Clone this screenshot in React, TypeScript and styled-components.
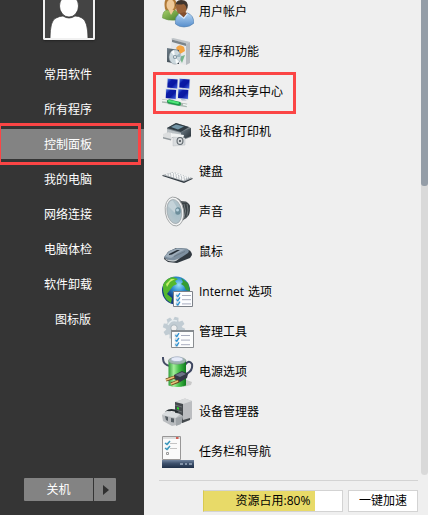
import React from 'react';
import styled, { createGlobalStyle } from 'styled-components';

const GlobalStyle = createGlobalStyle`
  *, *::before, *::after { box-sizing: border-box; }
  body { margin: 0; overflow: hidden; background: #efefef; }
  button { font: inherit; padding: 0; border: 0; }
`;

const Menu = styled.div`
  display: flex;
  width: 428px;
  height: 515px;
  overflow: hidden;
  background: #efefef;
  color: #000;
  font: 12px/20px 'Open Sans', 'Noto Sans CJK SC', sans-serif;
`;

const Sidebar = styled.aside`
  display: flex;
  flex-direction: column;
  width: 144px;
  background: #353535;
  color: #fff;
`;

const Avatar = styled.div`
  width: 52px;
  height: 40px;
  margin-left: 43px;
  border: 2px solid #f1f1f1;
  border-top: 0;
  border-radius: 0 0 2px 2px;
  background: #444;
  box-shadow: 0 1px 2px #222;
  svg { display: block; }
`;

const SideNav = styled.nav`
  display: flex;
  flex-direction: column;
  gap: 5px;
  padding-top: 19px;
`;

const SideItem = styled.div<{ $active?: boolean; $indent?: boolean }>`
  position: relative;
  height: 30px;
  padding-left: ${p => (p.$indent ? 55 : 44)}px;
  line-height: 32px;
  background: ${p => (p.$active ? '#838383' : 'transparent')};
`;

const Highlight = styled.span<{ $side?: boolean }>`
  position: absolute;
  left: ${p => (p.$side ? -2 : 9)}px;
  top: ${p => (p.$side ? -6 : 0)}px;
  width: 143px;
  height: 42px;
  border: 3px solid #fb4545;
  pointer-events: none;
`;

const PowerGroup = styled.div`
  display: flex;
  gap: 1px;
  margin: auto 0 14px 24px;
`;

const PowerButton = styled.button<{ $small?: boolean }>`
  display: flex;
  align-items: center;
  justify-content: center;
  width: ${p => (p.$small ? 22 : 69)}px;
  height: 23px;
  border-radius: ${p => (p.$small ? '0 1px 1px 0' : '1px 0 0 1px')};
  background: #838383;
  color: #fff;
  svg { margin-left: 2px; }
`;

const Content = styled.main`
  display: flex;
  flex-direction: column;
  width: 277px;
`;

const Applets = styled.div`
  height: 480px;
  overflow: hidden;
`;

const AppletList = styled.ul`
  margin: -8px 0 0;
  padding: 0;
  list-style: none;
`;

const Applet = styled.li`
  position: relative;
  display: flex;
  align-items: center;
  gap: 5px;
  height: 40px;
  padding-left: 18px;
  svg { flex: none; }
`;

const AppletName = styled.span`
  margin-top: -1px;
  white-space: nowrap;
  word-spacing: 1px;
`;

const Footer = styled.footer`
  display: flex;
  gap: 5px;
  height: 35px;
  margin: 0 3px 0 15px;
  padding: 9px 0 0 44px;
  border-top: 1px solid #d3d3d3;
`;

const Meter = styled.div`
  width: 140px;
  height: 22px;
  border: 1px solid #d3d3d3;
  border-left-color: #d9c94f;
  background: linear-gradient(90deg, #e8da68 111px, #fff 111px);
  line-height: 20px;
  text-align: center;
`;

const SpeedButton = styled.button`
  width: 70px;
  height: 22px;
  border: 1px solid #d3d3d3;
  background: #fff;
  color: #000;
`;

const ScrollTrack = styled.div`
  width: 7px;
  height: 475px;
  border-radius: 0 0 4px 4px;
  background: #d9d9d9;
`;

const ScrollThumb = styled.div`
  height: 186px;
  border-radius: 0 0 3px 3px;
  background: #949da7;
`;

const Icon = ({ children }: { children: React.ReactNode }) => (
  <svg width="32" height="32" viewBox="0 0 32 32">{children}</svg>
);

const GradientDefs = styled.svg`
  position: absolute;
  width: 0;
  height: 0;
`;

const Gradients = () => (
  <GradientDefs>
    <defs>
      <linearGradient id="steel" x2="1" y2="1"><stop stopColor="#f1f3f4" /><stop offset="1" stopColor="#9ba1a5" /></linearGradient>
      <linearGradient id="dark" x2="1" y2="1"><stop stopColor="#71808b" /><stop offset="1" stopColor="#20282e" /></linearGradient>
      <linearGradient id="screen" x2="1" y2="1"><stop stopColor="#4d7be8" /><stop offset=".3" stopColor="#0b1ba8" /><stop offset=".6" stopColor="#0a18a2" /><stop offset="1" stopColor="#4668e6" /></linearGradient>
      <linearGradient id="cell" x2="1"><stop stopColor="#2f9f38" /><stop offset=".3" stopColor="#a4ee9b" /><stop offset=".6" stopColor="#45c04a" /><stop offset="1" stopColor="#0f7a1c" /></linearGradient>
      <linearGradient id="greenShirt" x2="1" y2="1"><stop stopColor="#a8d16c" /><stop offset="1" stopColor="#477f29" /></linearGradient>
      <linearGradient id="blueShirt" x2="0" y2="1"><stop stopColor="#b5d6f5" /><stop offset="1" stopColor="#568dcb" /></linearGradient>
      <radialGradient id="ocean" cx=".6" cy=".3"><stop stopColor="#9be0fa" /><stop offset=".5" stopColor="#2d8ed0" /><stop offset="1" stopColor="#123b83" /></radialGradient>
      <radialGradient id="cone" cx=".65" cy=".5"><stop stopColor="#6f8c98" /><stop offset=".35" stopColor="#a9c0c9" /><stop offset="1" stopColor="#b4c4cb" /></radialGradient>
      <linearGradient id="bar" x2="0" y2="1"><stop stopColor="#7386a0" /><stop offset=".4" stopColor="#40536f" /><stop offset="1" stopColor="#1f3048" /></linearGradient>
    </defs>
  </GradientDefs>
);

const UsersIcon = () => (
  <Icon>
    <path d="M3 13Q1 2 7 2q8-1 8 9l-3 5H5z" fill="#b17a37" />
    <ellipse cx="8.500" cy="9" rx="4" ry="5.500" fill="#efc998" />
    <path d="M.5 22Q.5 14 6 14l3 3 4-3 4 3-3 7q-8 1-13.500-2z" fill="url(#greenShirt)" stroke="#5f9042" strokeWidth=".5" />
    <path d="m6.500 14 2.500 5 3-5z" fill="#efc998" />
    <ellipse cx="19.500" cy="11.500" rx="5.500" ry="7" fill="#9a633a" />
    <path d="M13.500 11Q13 4 19 4q8 0 6.500 8l-1 2q0-5-3-6-4 1-7 0z" fill="#3f352e" />
    <path d="M13.500 28q-1-8 4-10l4 2 4-3q6 2 6.500 10-4 4-10 4-5 0-8.500-3z" fill="url(#blueShirt)" stroke="#4e7cad" strokeWidth=".6" />
    <path d="m17 17 5 5 3-5-2-1-4 1z" fill="#84502f" />
    <path d="m17 17.500 4.500 4 3.500-4 1 .5-4 5-5.500-4z" fill="#dcecff" />
  </Icon>
);

const ProgramsIcon = () => (
  <Icon>
    <path d="m9 3 2-1 17 4v21l-5 2-14-4z" fill="#e6e8ea" />
    <path d="m9 3 2-1 17 4-4 2z" fill="#bfc4c8" /><path d="m10 3.500 14 4v2.500L10 6z" fill="#7b848a" />
    <path d="M24 8l4-2v21l-4 2z" fill="#b7bbc0" />
    <path d="M14 12q3-5 8-1l1 4-5 3z" fill="#f4a340" /><path d="m17 21 6-2-3 8z" fill="#76b58b" />
    <path d="m5 12 12 2v14L5 26z" fill="url(#dark)" />
    <ellipse cx="13" cy="21" rx="6" ry="7.200" fill="#cdd9de" stroke="#8897a0" strokeWidth=".5" />
    <path d="m13 21-4-5 3-2zm0 0 4 5-3 2z" fill="#f8fbfc" /><path d="m13 21 5-4v4z" fill="#9fb7c1" />
    <circle cx="13" cy="21" r="2.100" fill="#8196a2" /><circle cx="13" cy="21" r=".9" fill="#fff" />
  </Icon>
);

const NetworkIcon = () => (
  <Icon>
    {[[5, 2], [17, 2], [3.500, 12.500], [15.700, 12.500]].map(([x, y]) => (
      <g key={`${x}-${y}`} transform={`translate(${x} ${y})`}>
        <path d="m3 10 4 .5 2 1.500H4z" fill="#aeb9c7" />
        <path d="m0 0 11.300 1-.5 10.500L-.5 10z" fill="#d4dce8" />
        <path d="m.7.700 9.900.9-.4 9-9.900-1z" fill="url(#screen)" />
      </g>
    ))}
    <path d="m0 25 5 .5 2 1 12 2 6 1" fill="none" stroke="#a9b6af" strokeWidth="3.500" />
    <path d="m0 24.500 5 .5m16 3.500 5 1" fill="none" stroke="#f0f4f2" strokeWidth="1.700" />
    <path d="m7 25.500 10 2.200" fill="none" stroke="#1c9a4b" strokeWidth="4" strokeLinecap="round" />
    <path d="m7 25 9 2" fill="none" stroke="#4ee778" strokeWidth="2" strokeLinecap="round" />
  </Icon>
);

const PrinterIcon = () => (
  <Icon>
    <path d="m5 12 9-5 13 4 2 1v9l-11 4-13-6z" fill="#7a8389" />
    <path d="m5 12 9-5 13 4-8 5z" fill="#303c44" /><path d="m9 11 5-2.500 8 2-6 3z" fill="#7295a7" />
    <path d="m19 16 10-4v8l-10 4z" fill="url(#dark)" /><path d="m5 13 14 4v3L5 16z" fill="#b9c0c4" />
    <path d="m1 18 5-2 4 1v7l-9-2z" fill="#dcdedf" /><path d="m1 21 8 2v1.500l-8-2z" fill="#92999d" />
    <path d="m9 17 13 2-1 4-12-2z" fill="#f0f2f2" />
    <path d="m11 21 12 1v7l-12 1z" fill="#dadddf" stroke="#b4b9bc" strokeWidth=".4" />
    <ellipse cx="18" cy="25" rx="3.500" ry="4" fill="#61696f" /><ellipse cx="18" cy="25" rx="2.400" ry="3" fill="#d5d8da" /><circle cx="18" cy="25" r=".9" fill="#30383e" />
  </Icon>
);

const KeyboardIcon = () => (
  <Icon>
    <path d="m.5 19 11-3 19 6-8.500 4z" fill="#aab0b5" />
    <path d="m.5 19 21.500 6.500 8.500-3.500v1L22 27 .5 20z" fill="#303940" />
    <g fill="none" stroke="#f9fafa" strokeWidth="1.300" strokeDasharray="2 .8">
      <path d="m4 18.500 18 5.500M6.500 17.800l17.500 5.300M9 17.200l17 5M11 16.500l17 5" />
    </g>
  </Icon>
);

const SpeakerIcon = () => (
  <Icon>
    <path d="M12 1q5 1 7 4l5 .5q4 1.500 4 9-1 7-6 9l-7 6z" fill="#4f565a" />
    <path d="M20 7q7-1 8 3l-1 9-7 4z" fill="#3a4246" />
    <path d="M22 8q3 7 0 14m3-14q2 6 0 12" fill="none" stroke="#71797c" />
    <ellipse cx="12.500" cy="15.500" rx="9.200" ry="14.600" transform="rotate(-9 12.500 15.500)" fill="#f2f3f3" stroke="#989b9c" strokeWidth=".8" />
    <ellipse cx="12.300" cy="15.500" rx="7.300" ry="12.200" transform="rotate(-9 12.300 15.500)" fill="url(#cone)" stroke="#939b9f" strokeWidth=".6" />
    <path d="M6 10q2-6 5-5l5 8-3 4z" fill="#c5d3d9" /><ellipse cx="16" cy="15" rx="2.800" ry="3.700" fill="#6d8e9b" /><circle cx="15.500" cy="14" r="1.500" fill="#b9d3df" />
  </Icon>
);

const MouseIcon = () => (
  <Icon>
    <path d="m2 22 4-6 8-4 11 1q5 2 5 6l-2 3-13 5-9-1-4-3z" fill="#313940" />
    <path d="m2 21 5-6 8-3 10 .5q3 2 1 4.500l-6 4-7 4q-6 1-11-4z" fill="#7d8f9f" />
    <path d="m3 20 5-5 7-2.500 8 1-8 4-5 4q-4 1-7-1.500z" fill="#9eadba" />
    <path d="m2 22q5 3 11 2l5-2-4 3q-7 2-12-3z" fill="#c8cdd0" />
    <path d="m7 18 8-4 3 0-8 4.500-3 .5z" fill="#252e36" /><path d="m12 20.500 11-5" stroke="#667581" strokeWidth=".8" />
  </Icon>
);

const Checks = ({ x, y, step = 4.2 }: { x: number; y: number; step?: number }) => (
  <>
    {[0, 1, 2].map(i => (
      <g key={i} transform={`translate(${x} ${y + i * step})`}>
        <path d="M0-.5h3v3H0z" fill="#e0eaf1" stroke="#b1c0ca" strokeWidth=".4" />
        <path d="m.5.700 1.300 1.400L4-1.300" fill="none" stroke="#278fd0" strokeWidth="1.200" />
        <path d="M6 1h9" stroke="#9298ad" strokeWidth=".8" />
      </g>
    ))}
  </>
);

const InternetIcon = () => (
  <Icon>
    <circle cx="14" cy="14.500" r="14" fill="url(#ocean)" />
    <path d="M1 9q3-7 10-8l5 2-3 2 2 3-4 2-3 4-3 4 5 4-1 5Q0 23 1 9z" fill="#54b82e" />
    <path d="m19 2 7 5 2 8-4-1-2-4-3-2 2-2z" fill="#349d31" />
    <path d="m4 8 5-5 4 0-5 3-3 5z" fill="#c3ef6c" />
    <path d="M11.500 15.500h19v15h-19z" fill="#fcfdff" stroke="#7c8188" />
    <Checks x={14} y={18.500} />
  </Icon>
);

const ToolsIcon = () => (
  <Icon>
    <g transform="translate(12 12)" fill="#c1ccd3">
      {[0, 45, 90, 135, 180, 225, 270, 315].map(a => <path key={a} d="m-2.200-11 4 0 1 5h-6z" transform={`rotate(${a + 15})`} />)}
      <circle r="8" /><path d="M-6-3q3-6 9-4" fill="none" stroke="#e5ecef" strokeWidth="1.500" /><circle r="3.200" fill="#efefef" stroke="#aab7be" />
    </g>
    <path d="M9.500 14.500h22v17h-22z" fill="#fcfdfd" stroke="#898d90" /><path d="M9 14h23v2H9z" fill="#868c90" />
    <Checks x={13} y={18.500} step={4.600} />
  </Icon>
);

const PowerIcon = () => (
  <Icon>
    <path d="M22 23l8 3-1 3-8 2z" fill="#c9c9c9" />
    <path d="M1 1q-.5 8 7 9" fill="none" stroke="#454c65" strokeWidth="2" />
    <path d="M23 9q4-6 7-1 1 6-4 9l-4 2" fill="none" stroke="#3e4660" strokeWidth="2" />
    <path d="M6.500 4.500v25q8 3 17.500 0v-25z" fill="url(#cell)" />
    <ellipse cx="15.200" cy="4.700" rx="8.800" ry="3.500" fill="#9fb5ae" stroke="#718581" strokeWidth=".5" />
    <ellipse cx="15" cy="3.200" rx="6" ry="2.400" fill="#e5eaf8" stroke="#9aa6bd" strokeWidth=".6" />
    <path d="m12 19 8-4 6 3-1 4-7 4-6-3z" fill="#343946" /><path d="m13 19 7-3 4 2-6 3z" fill="#6d7486" />
    <path d="m13 21-9 3m13 1-8 3" stroke="#70481f" strokeWidth="3" /><path d="m12 21-8 3m12 1-7 3" stroke="#e8c17a" strokeWidth="1.500" />
  </Icon>
);

const DevicesIcon = () => (
  <Icon>
    <path d="m13 6 10-3.500 7 2.500v18l-9 4-8-3z" fill="#bbbdc0" /><path d="m13 6 10-3.500 7 2.500-9 3z" fill="#d9dbdc" />
    <path d="m13 6 8 2v19l-8-3z" fill="#44494d" /><path d="m13 9 7 2m-7 3 7 2" stroke="#777d80" strokeWidth=".8" />
    <path d="m15 11 2 .8v2l-2-.8z" fill="#25e428" />
    <path d="m20 27 8-3v-2l-7 2z" fill="#44494c" />
    <path d="M4 16q5-4 12 0" fill="none" stroke="#262d31" strokeWidth="2" />
    <path d="m0 19 5-4 13 3 3 2-2 8-9 2-9-5z" fill="#b9bcbf" /><path d="m0 19 5-4 13 3-4 4z" fill="#d9dcde" />
    <path d="m3 20 1 4 2 1v-4zm6 2v4l3 .5v-4z" fill="#555d63" /><path d="m14 22 7-2-2 8-5 2z" fill="#9fa4a8" />
  </Icon>
);

const TaskbarIcon = () => (
  <Icon>
    <path d="M.5.500h18v23H.5z" fill="#fafafa" stroke="#989797" /><path d="M1 1h17v2H1z" fill="#ddd" /><path d="M14 1h2.500v2H14z" fill="#d35d52" />
    <path d="M4 6h3v3H4zm0 5h3v3H4z" fill="#e2edf2" />
    <path d="m3 7 2 1.500 3-3.500m-5 7 2 1.500 3-3.500" fill="none" stroke="#3795bb" strokeWidth="1.500" />
    <path d="M8 7.500h7m-7 5h7" stroke="#c4c4c4" /><path d="M4.500 16.500h2v2h-2z" fill="none" stroke="#999" />
    <path d="M0 24h32v8H0z" fill="url(#bar)" /><path d="M18 27h3v2h-3zm5 0h2v2h-2zm4 0h3v2h-3z" fill="#8494aa" />
  </Icon>
);

const sideItems = ['常用软件', '所有程序', '控制面板', '我的电脑', '网络连接', '电脑体检', '软件卸载', '图标版'];

const applets: [string, React.ComponentType][] = [
  ['用户帐户', UsersIcon],
  ['程序和功能', ProgramsIcon],
  ['网络和共享中心', NetworkIcon],
  ['设备和打印机', PrinterIcon],
  ['键盘', KeyboardIcon],
  ['声音', SpeakerIcon],
  ['鼠标', MouseIcon],
  ['Internet 选项', InternetIcon],
  ['管理工具', ToolsIcon],
  ['电源选项', PowerIcon],
  ['设备管理器', DevicesIcon],
  ['任务栏和导航', TaskbarIcon],
];

export default function App() {
  return (
    <Menu>
      <GlobalStyle />
      <Gradients />
      <Sidebar>
        <Avatar>
          <svg width="48" height="38" viewBox="0 0 48 38">
            <g fill="#fff" stroke="#303030" strokeWidth=".7">
              <path d="M5 39q0-19 6-21 4-2 7-2 6 4 12 0 4 0 7 2 6 3 6 21z" />
              <ellipse cx="24" cy="6" rx="9.500" ry="11" />
            </g>
          </svg>
        </Avatar>
        <SideNav>
          {sideItems.map(name => (
            <SideItem key={name} $active={name === '控制面板'} $indent={name === '图标版'}>
              {name}
              {name === '控制面板' && <Highlight $side />}
            </SideItem>
          ))}
        </SideNav>
        <PowerGroup>
          <PowerButton>关机</PowerButton>
          <PowerButton $small>
            <svg width="6" height="10" viewBox="0 0 6 10"><path d="M0 0l6 5-6 5z" fill="#303030" /></svg>
          </PowerButton>
        </PowerGroup>
      </Sidebar>
      <Content>
        <Applets>
          <AppletList>
            {applets.map(([name, Glyph]) => (
              <Applet key={name}>
                <Glyph />
                <AppletName>{name}</AppletName>
                {name === '网络和共享中心' && <Highlight />}
              </Applet>
            ))}
          </AppletList>
        </Applets>
        <Footer>
          <Meter>资源占用:80%</Meter>
          <SpeedButton>一键加速</SpeedButton>
        </Footer>
      </Content>
      <ScrollTrack><ScrollThumb /></ScrollTrack>
    </Menu>
  );
}
